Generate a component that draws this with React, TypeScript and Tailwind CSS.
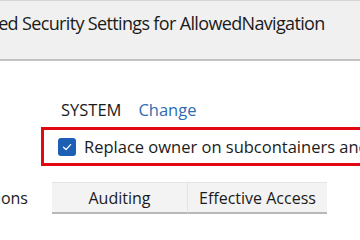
export default function App() {
  const font = "font-['Segoe_UI','Open_Sans','Noto_Sans',sans-serif]";
  return (
    <div className={`w-[360px] h-[240px] overflow-hidden bg-white text-[#1b1b1b] ${font}`}>
      {/* window title bar */}
      <div className="h-[61px] bg-[#f0f0f0] border-t border-[#d6d6d6] border-b-2 border-b-[#c2c2c2] overflow-hidden">
        <div className="mt-[10px] ml-[-59px] whitespace-nowrap text-[18px] leading-[24px] tracking-[-0.65px]">
          Advanced Security Settings for AllowedNavigation
        </div>
      </div>

      {/* owner */}
      <div className="mt-[38px] pl-[61px] flex items-center gap-[17px] text-[16.5px] leading-[22px] whitespace-nowrap">
        <span>SYSTEM</span>
        <span className="text-[#2f6cb3]">Change</span>
      </div>

      {/* highlighted option */}
      <div className="mt-[6px] ml-[41px] w-[360px] h-[39px] border-[3px] border-[#e30613] flex items-center pl-[14px] gap-[8px] whitespace-nowrap">
        <span className="w-[18px] h-[18px] shrink-0 rounded-[3px] bg-[#1c5fb5] flex items-center justify-center">
          <svg width="12" height="12" viewBox="0 0 12 12" fill="none">
            <path d="M2.5 6.3 L5 8.6 L9.6 3.6" stroke="white" strokeWidth="1.3" strokeLinecap="round" strokeLinejoin="round" />
          </svg>
        </span>
        <span className="text-[16.5px] leading-[22px]">Replace owner on subcontainers and objects</span>
      </div>

      {/* tabs */}
      <div className="mt-[16px] flex items-stretch h-[32px] text-[16px] whitespace-nowrap">
        <div className="w-[52px] bg-white flex items-center justify-end pr-[24px] overflow-hidden">
          <span>Permissions</span>
        </div>
        <div className="w-[136px] bg-[#f3f3f3] border-t border-r border-[#e4e4e4] border-b-2 border-b-[#b8b8b8] flex items-center justify-center">
          Auditing
        </div>
        <div className="w-[139px] bg-[#f3f3f3] border-t border-[#e4e4e4] border-b-2 border-b-[#b8b8b8] flex items-center justify-center">
          Effective Access
        </div>
      </div>
    </div>
  );
}
